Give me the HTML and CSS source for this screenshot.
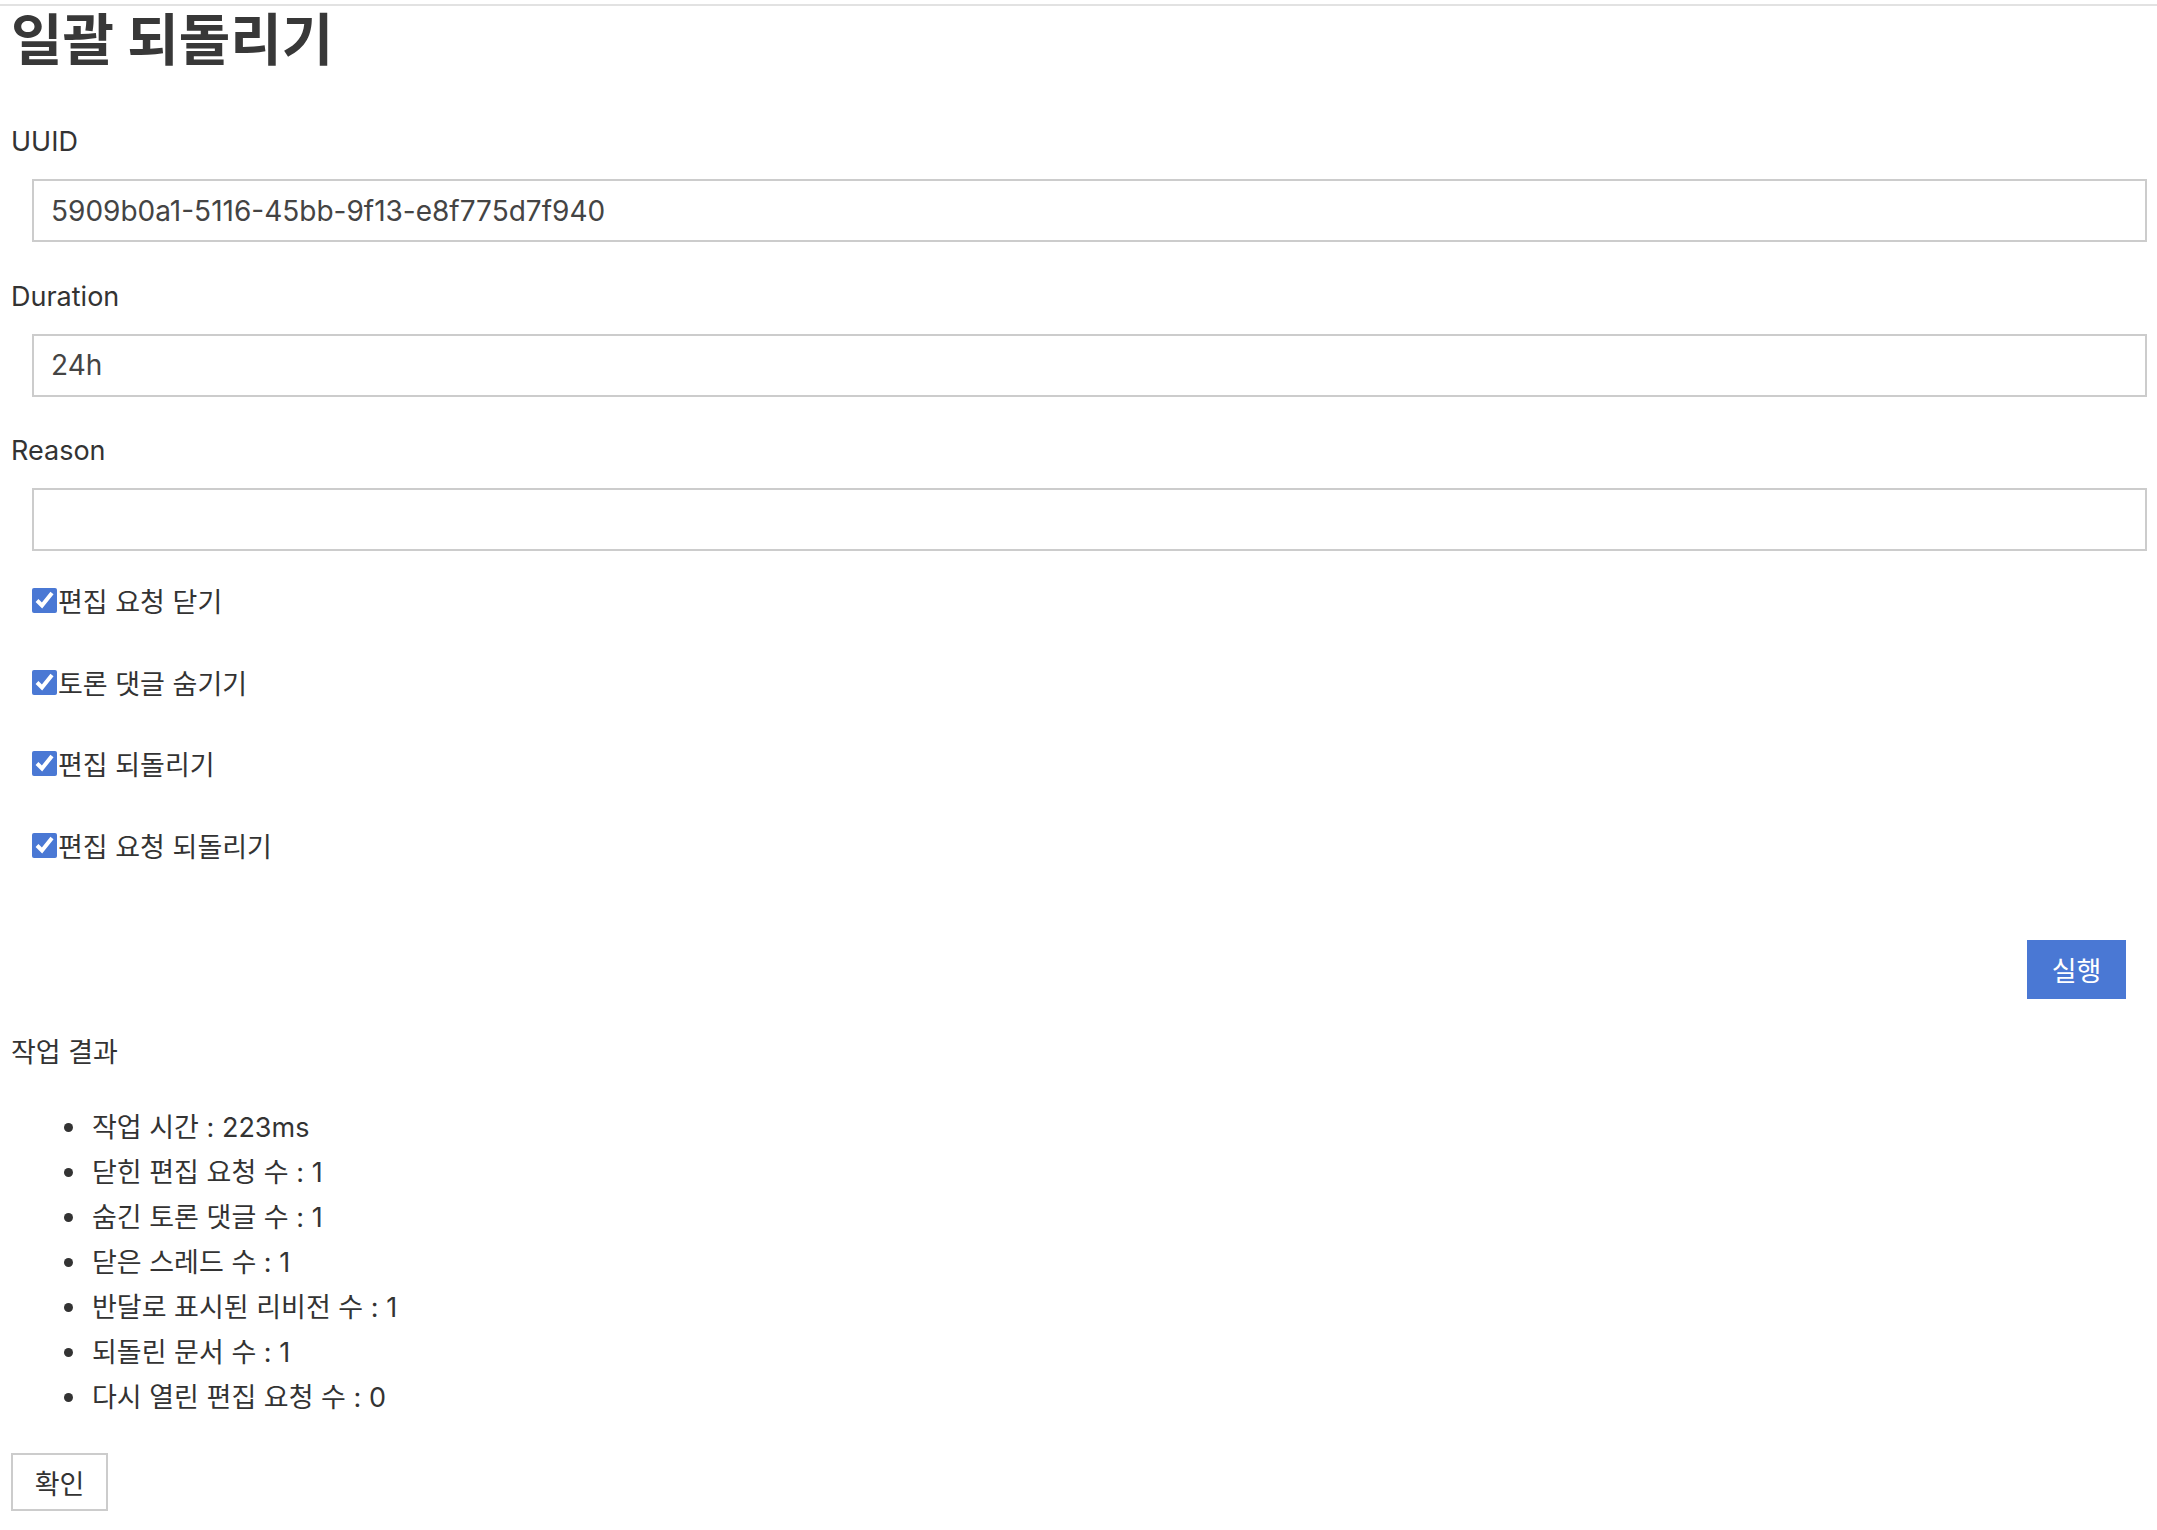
FILE: index.html
```html
<!DOCTYPE html>
<html lang="ko">

<head>
    <meta charset="UTF-8">
    <meta name="viewport" content="width=device-width, initial-scale=1.0">
    <title>일괄 되돌리기</title>
    <link rel="stylesheet" href="styles.css">
</head>

<body>
    <div class="topline"></div>
    <div class="page">
        <h1>일괄 되돌리기</h1>

        <div class="fields">
            <div class="field">
                <label for="uuid">UUID</label>
                <input type="text" id="uuid" value="5909b0a1-5116-45bb-9f13-e8f775d7f940">
            </div>
            <div class="field">
                <label for="duration">Duration</label>
                <input type="text" id="duration" value="24h">
            </div>
            <div class="field">
                <label for="reason">Reason</label>
                <input type="text" id="reason" value="">
            </div>
        </div>

        <div class="checks">
            <label class="check"><input type="checkbox" checked>편집 요청 닫기</label>
            <label class="check"><input type="checkbox" checked>토론 댓글 숨기기</label>
            <label class="check"><input type="checkbox" checked>편집 되돌리기</label>
            <label class="check"><input type="checkbox" checked>편집 요청 되돌리기</label>
        </div>

        <div class="actions">
            <button class="run">실행</button>
        </div>

        <p class="result-title">작업 결과</p>
        <ul class="result">
            <li>작업 시간 : 223ms</li>
            <li>닫힌 편집 요청 수 : 1</li>
            <li>숨긴 토론 댓글 수 : 1</li>
            <li>닫은 스레드 수 : 1</li>
            <li>반달로 표시된 리비전 수 : 1</li>
            <li>되돌린 문서 수 : 1</li>
            <li>다시 열린 편집 요청 수 : 0</li>
        </ul>

        <button class="ok">확인</button>
    </div>
</body>

</html>
```

FILE: styles.css
```css
* {
    padding: 0;
    margin: 0;
    box-sizing: border-box;
}

body {
    font-family: "Inter", "Noto Sans CJK KR", sans-serif;
    font-size: 27px;
    color: #333;
    background: #fff;
}

.topline {
    height: 6px;
    border-bottom: 2px solid #e2e2e2;
}

.page {
    padding: 0 11px;
}

h1 {
    margin-top: 4px;
    font-size: 56px;
    line-height: 60px;
    font-weight: 700;
    color: #383838;
}

.fields {
    margin-top: 54px;
}

.field + .field {
    margin-top: 36.5px;
}

.field label {
    display: block;
    line-height: 36px;
    margin-bottom: 19px;
}

.field input {
    display: block;
    height: 63px;
    width: calc(100% - 20px);
    margin-left: 21px;
    padding: 0 17px;
    border: 2px solid #ccc;
    font-family: inherit;
    font-size: 28px;
    color: #444;
    outline: none;
}

.checks {
    margin-top: 9px;
}

.check {
    display: flex;
    align-items: center;
    height: 81.5px;
    padding-left: 21px;
    gap: 1px;
}

.check input {
    width: 25px;
    height: 25px;
    margin: 0;
    accent-color: #4a78d4;
}

.actions {
    display: flex;
    justify-content: flex-end;
    margin-top: 54px;
    padding-right: 20px;
}

.run {
    width: 99px;
    height: 59px;
    border: none;
    background: #4a78d4;
    color: #fff;
    font-family: inherit;
    font-size: 27px;
    cursor: pointer;
}

.result-title {
    margin-top: 35.5px;
    line-height: 36px;
}

.result {
    margin-top: 34.5px;
    padding-left: 53px;
    list-style: none;
}

.result li {
    display: flex;
    align-items: center;
    line-height: 45px;
}

.result li::before {
    content: "";
    width: 9px;
    height: 9px;
    border-radius: 50%;
    background: #333;
    margin-right: 19px;
    flex-shrink: 0;
}

.ok {
    margin-top: 33px;
    width: 97px;
    height: 58px;
    border: 2px solid #ccc;
    background: #fff;
    color: #333;
    font-family: inherit;
    font-size: 27px;
    cursor: pointer;
}
```
